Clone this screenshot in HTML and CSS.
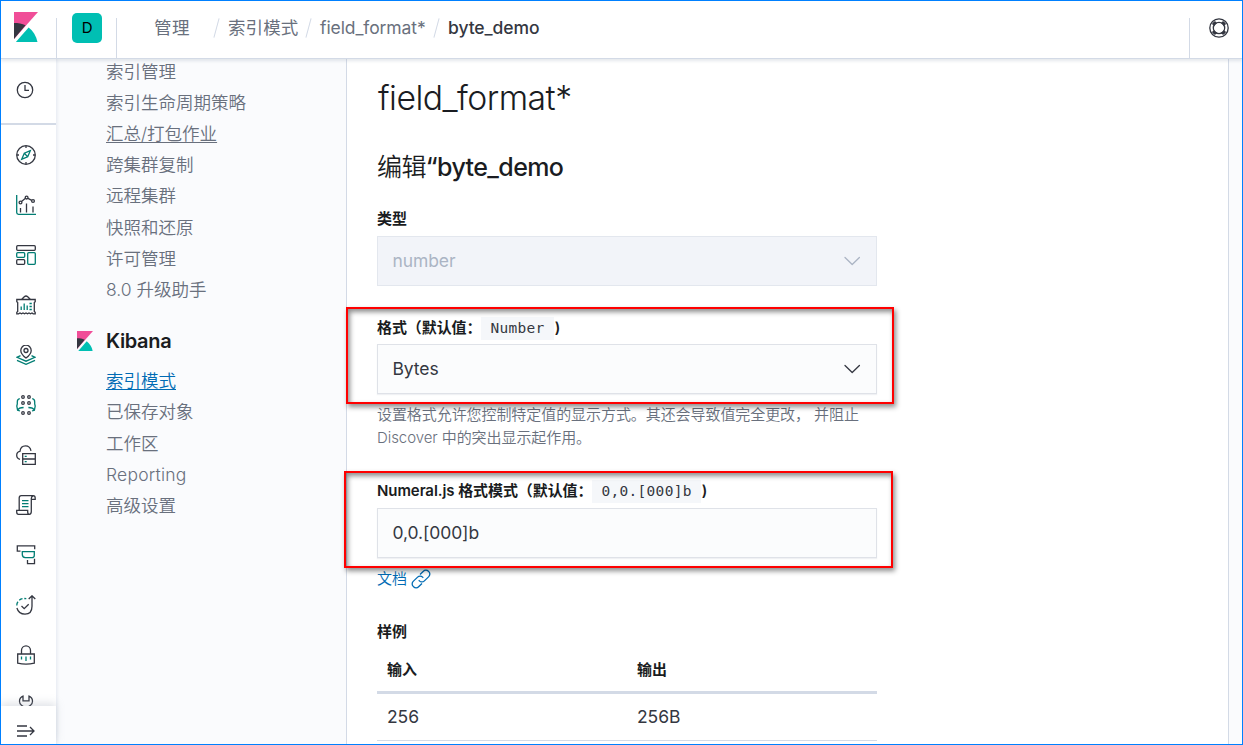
FILE: index.html
```html
<!DOCTYPE html>
<html lang="zh-CN">
<head>
<meta charset="utf-8">
<title>Kibana</title>
<link rel="stylesheet" href="styles.css">
</head>
<body>
<svg class="defs" width="0" height="0">
  <symbol id="kibana" viewBox="0 0 24 30"><path fill="#f04e98" d="M0 0v27L24 0z"/><path fill="#343741" d="M0 11v16L11.500 13.200C8.100 11.600 4.200 11 0 11z"/><path fill="#00bfb3" d="M14.600 15.500L1.900 30H23.500c-1.200-6-4.400-11.100-8.900-14.500z"/></symbol>
  <symbol id="chevron" viewBox="0 0 20 20"><path d="M3 6.500l7.200 7 7.200-7" fill="none" stroke="currentColor" stroke-width="1.300" stroke-linecap="round" stroke-linejoin="round"/></symbol>
</svg>
<div class="frame">
  <header class="header">
    <a class="logo"><svg width="24" height="30"><use href="#kibana"/></svg></a>
    <div class="space"><span class="avatar">D</span></div>
    <nav class="crumbs">
      <span class="crumb crumb-root">管理</span><i class="slash"></i>
      <span class="crumb crumb-index">索引模式</span><i class="slash"></i>
      <span class="crumb crumb-pattern">field_format*</span><i class="slash"></i>
      <span class="crumb current">byte_demo</span>
    </nav>
    <div class="help"><svg class="icon" width="20" height="20" viewBox="0 0 20 20"><circle cx="10" cy="10" r="9.200"/><circle cx="10" cy="10" r="5.700"/><path stroke-width="2.200" d="M3.600 5.200l2.300 2M5.200 3.600l2 2.300M16.400 5.200l-2.300 2M14.800 3.600l-2 2.300M3.600 14.800l2.300-2M5.200 16.400l2-2.300M16.400 14.800l-2.300-2M14.800 16.400l-2-2.300"/></svg></div>
  </header>
  <div class="body">
    <aside class="rail">
      <div class="recent"><svg class="icon" width="18" height="18" viewBox="0 0 18 18"><circle cx="9" cy="9" r="7.700"/><path d="M9 4v5.300h4"/></svg></div>
      <div class="apps">
        <svg class="icon" viewBox="0 0 20 20"><circle cx="10" cy="10" r="9.300"/><path d="M10 1v2M10 17v2M1 10h2M17 10h2"/><path class="t" d="M14.300 5.700l-6 2.500-2.600 6 6-2.400zM8.300 8.200l3.400 3.600"/></svg>
        <svg class="icon" viewBox="0 0 20 20"><path class="t" d="M.7 0v17.500q0 1.800 1.800 1.800H20"/><path d="M4.500 13v4.500M10.500 8.500v9M17 11.500v6M5.500 6.500L9.200 3.500M12 3.400l3.700 2"/><circle cx="4.500" cy="7.500" r="1.400"/><circle cx="10.600" cy="2.600" r="1.400"/><circle cx="17" cy="6" r="1.400"/></svg>
        <svg class="icon" viewBox="0 0 20 20"><rect x=".7" y=".7" width="18.600" height="4.600" rx="1"/><rect class="t" x=".7" y="7.700" width="8" height="4.600" rx="1"/><rect x=".7" y="14.700" width="8" height="4.600" rx="1"/><rect class="t" x="11.700" y="7.700" width="7.600" height="11.600" rx="1"/></svg>
        <svg class="icon" viewBox="0 0 20 20"><path d="M.8 4.500h18.400v2.300l-.9.700v9l.9.700v1.600h-2l-1.200-.8-1.500.8-1.500-.8-1.500.8-1.500-.8-1.500.8-1.500-.8-1.500.8-1.500-.8-1.500.8H.8v-1.600l.9-.7v-9l-.9-.7zM5.500 4.500L8.300 1.700q1.700-1.500 3.400 0l2.800 2.800"/><path class="t" d="M5.200 11.500V15M8.200 8.500V15M11.200 10.500V15M13.500 8.500h2.300M13.500 11.500h2.300M13.500 14.500h2.300"/></svg>
        <svg class="icon" viewBox="0 0 20 20"><path d="M10 13S4.800 9 4.800 5.400a5.200 5.200 0 0110.400 0C15.200 9 10 13 10 13z"/><circle cx="10" cy="5.500" r="2"/><path class="t" d="M4.500 10.700L1 12.300l9 3.900 9-3.900-3.500-1.600M1 15.400l9 3.900 9-3.900"/></svg>
        <svg class="icon" viewBox="0 0 20 20"><circle cx="7" cy="2" r="1.300"/><circle cx="13" cy="2" r="1.300"/><circle cx="7" cy="8" r="1.300"/><circle cx="13" cy="8" r="1.300"/><circle cx="7" cy="18" r="1.300"/><circle cx="13" cy="18" r="1.300"/><path class="t" d="M3.800 3.700Q1.300 4 1.300 7v2L.8 11l.8 4.200 2.400.8M1.800 15q1-2.300 5.800-2.500M16.200 3.700Q18.700 4 18.700 7v2l.5 2-.8 4.200-2.400.8M18.200 15q-1-2.300-5.800-2.500"/></svg>
        <svg class="icon" viewBox="0 0 20 20"><path d="M4 14.300Q.7 13.500.7 10.300q0-3.500 3.300-4Q4.500.8 9.500.8q4.500 0 5.500 5M6.700 8.700h12.600v10.600H6.700zM6.700 14h12.600"/><path class="t" d="M8.700 11.400h2M8.700 16.600h2"/></svg>
        <svg class="icon" viewBox="0 0 20 20"><path d="M3.200 15V3q0-2.300 2-2.300h12q2 0 2 2.300v1.300h-3.500M17.300.9q-2 .5-2 2.600v13q0 2.800-2 2.800H2.500Q.7 19.300.7 17v-1.700h11V17q0 2.300 1.700 2.300"/><path class="t" d="M6 5.700h6.500M6 8.700h6.500M6 11.700h6.500"/></svg>
        <svg class="icon" viewBox="0 0 20 20"><path d="M4.500 6.200H1.300V.8h17.400v3.400M11.500 15v3.700h7v-4.900"/><path class="t" d="M6.300 6.700h12v3.500q0 2.500-2.500 2.500H9.300Q6.300 12.300 6.300 9.500z"/></svg>
        <svg class="icon" viewBox="0 0 20 20"><path d="M.9 13Q2.700 19.200 9 19.200q7-.2 7-8V1M12.700 4L16 .8 19.300 4M5.500 11l2.700 2.700 4.500-4.500"/><path class="t" d="M.8 10.500Q.7 8 2 6.700M3.300 5.200Q4.600 4 6.500 3.700M8.300 3.500l2 .2"/></svg>
        <svg class="icon" viewBox="0 0 20 20"><path d="M5.500 8.500V5.300a4.500 4.500 0 019 0v3.200M1.700 9h16.600v9.200q-8.300 1.800-16.600 0z"/><path class="t" d="M5.500 11.500v3M10 11.500v4.500M14.500 11.500v3"/></svg>
        <svg class="icon" viewBox="0 0 20 20"><path d="M7 1.200C4.500 2.200 3.500 4.200 3.500 6.300c0 2.200 1.500 4 3.500 5V19h6v-7.700c2-1 3.500-2.800 3.500-5 0-2.100-1-4.100-3.500-5.100v4.600H7z"/></svg>
      </div>
      <div class="expand"><svg class="icon" width="20" height="16" viewBox="0 0 20 16"><path d="M1 3h10M1 8h17M1 13h10M14 4l4 4-4 4"/></svg></div>
    </aside>
    <nav class="side">
      <ul class="links first">
        <li>索引管理</li><li>索引生命周期策略</li><li class="hover">汇总/打包作业</li><li>跨集群复制</li><li>远程集群</li><li>快照和还原</li><li>许可管理</li><li>8.0 升级助手</li>
      </ul>
      <div class="heading"><svg width="16" height="20"><use href="#kibana"/></svg><b>Kibana</b></div>
      <ul class="links">
        <li class="active">索引模式</li><li>已保存对象</li><li>工作区</li><li class="latin">Reporting</li><li>高级设置</li>
      </ul>
    </nav>
    <main class="panel">
      <h1>field_format*</h1>
      <h2><span class="thin">编辑</span>“byte_demo</h2>
      <div class="label type-label">类型</div>
      <div class="field disabled">number<svg width="20" height="20"><use href="#chevron"/></svg></div>
      <section class="group format">
        <div class="label">格式（默认值：<code>Number</code><span class="paren">)</span></div>
        <div class="field">Bytes<svg width="20" height="20"><use href="#chevron"/></svg></div>
        <span class="mark"></span>
      </section>
      <p class="hint">设置格式允许您控制特定值的显示方式。其还会导致值完全更改， 并阻止<br>Discover 中的突出显示起作用。</p>
      <section class="group numeral">
        <div class="label">Numeral.js 格式模式（默认值：<code>0,0.[000]b</code><span class="paren">)</span></div>
        <div class="field">0,0.[000]b</div>
        <span class="mark"></span>
      </section>
      <a class="doc">文档<svg class="link-icon" width="20" height="20" viewBox="0 0 20 20"><path d="M9 5.500l3.400-3.300a3.500 3.500 0 015 0l.4.400a3.500 3.500 0 010 5l-4.400 4.300a3.500 3.500 0 01-5 0l-.7-.7M11 14.500l-3.400 3.300a3.500 3.500 0 01-5 0l-.4-.4a3.500 3.500 0 010-5l4.400-4.300a3.500 3.500 0 015 0l.7.700"/></svg></a>
      <div class="label sample-label">样例</div>
      <table>
        <thead><tr><th>输入</th><th>输出</th></tr></thead>
        <tbody><tr><td>256</td><td>256B</td></tr></tbody>
      </table>
    </main>
    <div class="gutter"></div>
  </div>
</div>
</body>
</html>
```
FILE: styles.css
```css
* { box-sizing: border-box; }
body { margin: 0; font: 17.5px/1.5 Inter, "Noto Sans CJK SC", sans-serif; color: #343741; letter-spacing: -.09px; }
.defs { position: absolute; }
.frame { width: 1243px; height: 745px; border: 1px solid #0080ff; overflow: hidden; display: flex; flex-direction: column; background: #fff; }
.icon { fill: none; stroke: #343741; stroke-width: 1.3; display: block; }
.icon .t { stroke: #017d73; }

.header { height: 58px; flex: none; display: flex; align-items: stretch; border-bottom: 1px solid #d3dae6; box-shadow: 0 2px 3px rgba(152, 162, 179, .25); position: relative; z-index: 2; background: #fff; }
.logo { width: 55px; padding: 11px 0 0 13px; }
.space { width: 61px; margin-top: 17px; border: solid #d3dae6; border-width: 0 1px; }
.avatar { display: block; width: 30px; height: 30px; margin: -5px 0 0 15px; border-radius: 5px; background: #00bfb3; color: #000; font: 400 15px/30px Inter, sans-serif; text-align: center; }
.crumbs { display: flex; align-items: center; height: 54px; padding-left: 37px; flex: 1; color: #69707d; font-weight: 400; }
.crumb { white-space: nowrap; }
.crumb-root { width: 62px; letter-spacing: .4px; }
.crumb-index { width: 80px; letter-spacing: .1px; }
.crumb-pattern { width: 116px; }
.slash { width: 1px; height: 20px; background: #d3dae6; transform: rotate(15deg); margin-right: 12px; }
.crumb-index, .crumb-pattern, .current { margin-left: -1px; }
.current { color: #343741; font-weight: 500; }
.help { width: 53px; margin-top: 17px; border-left: 1px solid #d3dae6; padding-left: 19px; }

.body { flex: 1; min-height: 0; display: flex; background: #fafbfd; }
.rail { width: 56px; flex: none; display: flex; flex-direction: column; background: #fff; border-right: 1px solid #eceff5; box-shadow: 1px 0 2px rgba(152, 162, 179, .12); }
.recent { height: 66px; flex: none; border-bottom: 2px solid #d3dae6; padding: 22px 0 0 15px; }
.apps { flex: 1; min-height: 0; overflow: hidden; display: flex; flex-direction: column; gap: 30px; padding: 20px 0 0 15px; }
.apps svg { width: 20px; height: 20px; flex: none; }
.expand { height: 38px; flex: none; padding: 17px 0 0 15px; box-shadow: 0 -3px 8px rgba(152, 162, 179, .3); }

.side { width: 289px; flex: none; padding-left: 49px; color: #69707d; font-weight: 350; letter-spacing: 0; }
.links { list-style: none; margin: 0; padding: 0; }
.links li { height: 31.2px; line-height: 31.2px; }
.first { margin-top: -3.4px; }
.hover, .active { text-decoration: underline; text-underline-offset: 2px; text-decoration-thickness: 1px; }
.active { color: #006bb4; }
.latin { letter-spacing: .2px; }
.heading { display: flex; align-items: center; gap: 13px; margin: 19.500px 0 8.700px -29px; height: 32px; color: #1a1c21; font-size: 20px; letter-spacing: -.35px; }
.heading b { font-weight: 600; }

.panel { width: 883px; flex: none; background: #fff; border: solid #d3dae6; border-width: 0 1px; padding: 15px 0 0 30px; }
h1 { margin: 0; padding-left: 1px; font-size: 33.75px; line-height: 48px; font-weight: 300; color: #1a1c21; letter-spacing: -.55px; }
h2 { margin: 29px 0 24px; font-size: 25px; line-height: 32px; font-weight: 500; color: #1a1c21; letter-spacing: -.6px; }
.thin { font-weight: 350; }
.label { height: 24px; line-height: 24px; font-size: 15px; font-weight: 600; color: #1a1c21; white-space: nowrap; letter-spacing: -.08px; }
.field { width: 500px; height: 50px; padding: 0 14px 0 14.500px; display: flex; align-items: center; justify-content: space-between; border: 1px solid #dfe2e8; background: #fbfcfd; box-shadow: 0 1px 1px rgba(152, 162, 179, .15); }
.disabled { margin-top: 5px; background: #f2f4f9; color: #abb4c4; border-color: #e3e7ee; box-shadow: none; }
.group { position: relative; width: 500px; }
.group .field { margin-top: 4px; }
.format { margin-top: 30px; }
.mark { position: absolute; left: -31px; top: -9px; width: 548px; height: 97px; border: 2px solid #f00; box-shadow: 2px 3px 5px rgba(0, 0, 0, .45), inset 2px 3px 5px rgba(0, 0, 0, .45); }
.numeral { margin-top: 31px; }
.numeral .mark { left: -33px; top: -9px; width: 549px; }
.numeral .label { position: relative; top: -1px; }
code { display: inline-block; height: 23px; padding: 0 9px; background: #f5f7fa; color: #343741; font: 400 14.500px/23px "DejaVu Sans Mono", monospace; letter-spacing: .3px; }
.paren { margin-left: 1px; }
.hint { margin: 9px 0 0; font-size: 15px; line-height: 23px; font-weight: 350; color: #69707d; white-space: nowrap; letter-spacing: -.07px; }
.doc { display: flex; align-items: center; gap: 4px; margin-top: 9px; height: 24px; font-size: 15px; font-weight: 350; color: #006bb4; }
.link-icon { fill: none; stroke: currentColor; stroke-width: 1.3; }
.sample-label { margin-top: 29px; }
table { width: 500px; table-layout: fixed; border-collapse: collapse; }
th { height: 48px; padding: 6px 10px 0; text-align: left; font-size: 15px; font-weight: 600; color: #1a1c21; border-bottom: 3px solid #d3dae6; }
td { height: 48px; padding: 1px 10px 0; border-bottom: 1px solid #d3dae6; }
```
